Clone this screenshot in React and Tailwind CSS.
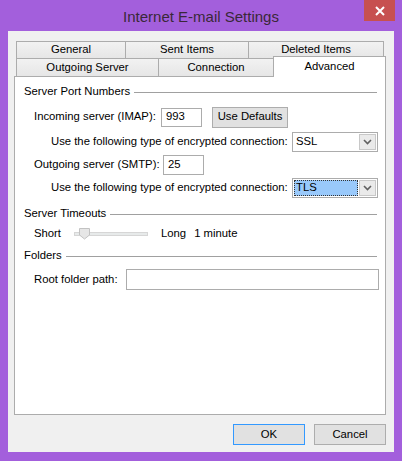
import React from "react";

const font = { fontFamily: '"Liberation Sans", Arial, sans-serif' };

function Chevron() {
  return (
    <svg width="9" height="6" viewBox="0 0 9 6">
      <path d="M1 1 L4.5 4.5 L8 1" fill="none" stroke="#606060" strokeWidth="1.6" />
    </svg>
  );
}

function Combo({ value, selected }) {
  return (
    <div className="w-[86px] h-[20px] shrink-0 border border-[#acacac] bg-white flex items-center p-[1px]">
      <div
        className={
          selected
            ? "flex-1 h-full bg-[#99c9fb] border border-dotted border-[#333] flex items-center pl-[1px] text-[11.3px] leading-none"
            : "flex-1 h-full flex items-center pl-[2px] text-[11.3px] leading-none"
        }
      >
        {value}
      </div>
      <div className="w-[17px] h-[16px] ml-[1px] border border-[#c8c8c8] bg-[#eaeaea] flex items-center justify-center">
        <Chevron />
      </div>
    </div>
  );
}

function GroupLabel({ children, className }) {
  return (
    <div className={"h-[16px] flex items-center pl-[9px] pr-[8px] " + (className || "")}>
      <span className="text-[11.3px] leading-none whitespace-nowrap">{children}</span>
      <div className="flex-1 ml-[4px] h-px bg-[#a0a0a0]" />
    </div>
  );
}

export default function App() {
  return (
    <div className="w-[402px] h-[461px] bg-[#a35fdc] flex flex-col text-black whitespace-nowrap" style={font}>
      <div className="h-[31px] relative flex items-center justify-center">
        <span className="text-[15px] text-[#3a2838] leading-none mt-[1px]">Internet E-mail Settings</span>
        <div className="absolute right-[7px] top-0 w-[31px] h-[21px] bg-[#c75050] flex items-center justify-center">
          <svg width="10" height="10" viewBox="0 0 10 10">
            <path d="M1 1 L9 9 M9 1 L1 9" stroke="white" strokeWidth="2" />
          </svg>
        </div>
      </div>
      <div className="mx-[8px] h-[421px] bg-[#f0f0f0] flex flex-col">
        <div className="pt-[10px] pl-[8px]">
          <div className="flex h-[17px]">
            <div className="w-[109px] h-full border-l border-t border-[#acacac] bg-gradient-to-b from-[#f2f2f2] to-[#e6e6e6] flex items-center justify-center text-[11.3px] leading-none">General</div>
            <div className="w-[123px] h-full border-l border-t border-[#acacac] bg-gradient-to-b from-[#f2f2f2] to-[#e6e6e6] flex items-center justify-center text-[11.3px] leading-none">Sent Items</div>
            <div className="w-[136px] h-full border-l border-t border-r border-[#acacac] bg-gradient-to-b from-[#f2f2f2] to-[#e6e6e6] flex items-center justify-center text-[11.3px] leading-none">Deleted Items</div>
          </div>
          <div className="flex h-[18px] items-end">
            <div className="w-[142px] h-[18px] border-l border-t border-[#acacac] bg-gradient-to-b from-[#f2f2f2] to-[#e6e6e6] flex items-center justify-center text-[11.3px] leading-none">Outgoing Server</div>
            <div className="w-[115px] h-[18px] border-l border-t border-[#acacac] bg-gradient-to-b from-[#f2f2f2] to-[#e6e6e6] flex items-center justify-center text-[11.3px] leading-none">Connection</div>
            <div className="w-[113px] h-[21px] -mb-px relative z-10 border-l border-t border-r border-[#acacac] bg-white flex items-start pt-[4px] justify-center text-[11.3px] leading-none">Advanced</div>
          </div>
        </div>
        <div className="ml-[6px] w-[372px] h-[339px] border border-[#acacac] bg-white flex flex-col">
          <GroupLabel className="mt-[7px]">Server Port Numbers</GroupLabel>
          <div className="mt-[7px] h-[20px] flex items-center pl-[19px]">
            <span className="w-[127px] shrink-0 text-[11.3px] leading-none">Incoming server (IMAP):</span>
            <div className="w-[41px] h-[19px] shrink-0 border border-[#acacac] flex items-center pl-[4px] text-[11.3px] leading-none">993</div>
            <div className="ml-[10px] w-[76px] h-[21px] shrink-0 border border-[#adadad] bg-[#e1e1e1] flex items-center justify-center text-[11.3px] leading-none">Use Defaults</div>
          </div>
          <div className="mt-[5px] h-[20px] flex items-center pl-[36px]">
            <span className="w-[241px] shrink-0 text-[11.3px] leading-none">Use the following type of encrypted connection:</span>
            <Combo value="SSL" />
          </div>
          <div className="mt-[3px] h-[20px] flex items-center pl-[19px]">
            <span className="w-[129px] shrink-0 text-[11.3px] leading-none">Outgoing server (SMTP):</span>
            <div className="w-[41px] h-[20px] shrink-0 border border-[#acacac] flex items-center pl-[4px] text-[11.3px] leading-none">25</div>
          </div>
          <div className="mt-[3px] h-[20px] flex items-center pl-[36px]">
            <span className="w-[241px] shrink-0 text-[11.3px] leading-none">Use the following type of encrypted connection:</span>
            <Combo value="TLS" selected />
          </div>
          <GroupLabel className="mt-[8px]">Server Timeouts</GroupLabel>
          <div className="mt-[4px] h-[16px] flex items-center pl-[19px]">
            <span className="w-[40px] shrink-0 text-[11.3px] leading-none">Short</span>
            <div className="relative w-[74px] h-[12px] shrink-0 flex items-center">
              <div className="w-full h-[4px] bg-[#e7eaea] border border-[#d6d6d6]" />
              <svg className="absolute left-[5px] top-0" width="11" height="12" viewBox="0 0 11 12">
                <path d="M0.5 0.5 H10.5 V7 L5.5 11 L0.5 7 Z" fill="#e6e6e6" stroke="#c2c2c2" />
              </svg>
            </div>
            <span className="ml-[13px] text-[11.3px] leading-none">Long</span>
            <span className="ml-[8px] text-[11.3px] leading-none">1 minute</span>
          </div>
          <GroupLabel className="mt-[6px]">Folders</GroupLabel>
          <div className="mt-[5px] h-[21px] flex items-center pl-[19px]">
            <span className="w-[92px] shrink-0 text-[11.3px] leading-none">Root folder path:</span>
            <div className="w-[253px] h-[21px] shrink-0 border border-[#acacac]" />
          </div>
        </div>
        <div className="mt-[9px] flex justify-end pr-[8px] gap-[9px]">
          <div className="w-[72px] h-[21px] border border-[#3399ff] bg-[#e1e1e1] flex items-center justify-center text-[11.3px] leading-none">OK</div>
          <div className="w-[72px] h-[21px] border border-[#adadad] bg-[#e1e1e1] flex items-center justify-center text-[11.3px] leading-none">Cancel</div>
        </div>
      </div>
    </div>
  );
}
